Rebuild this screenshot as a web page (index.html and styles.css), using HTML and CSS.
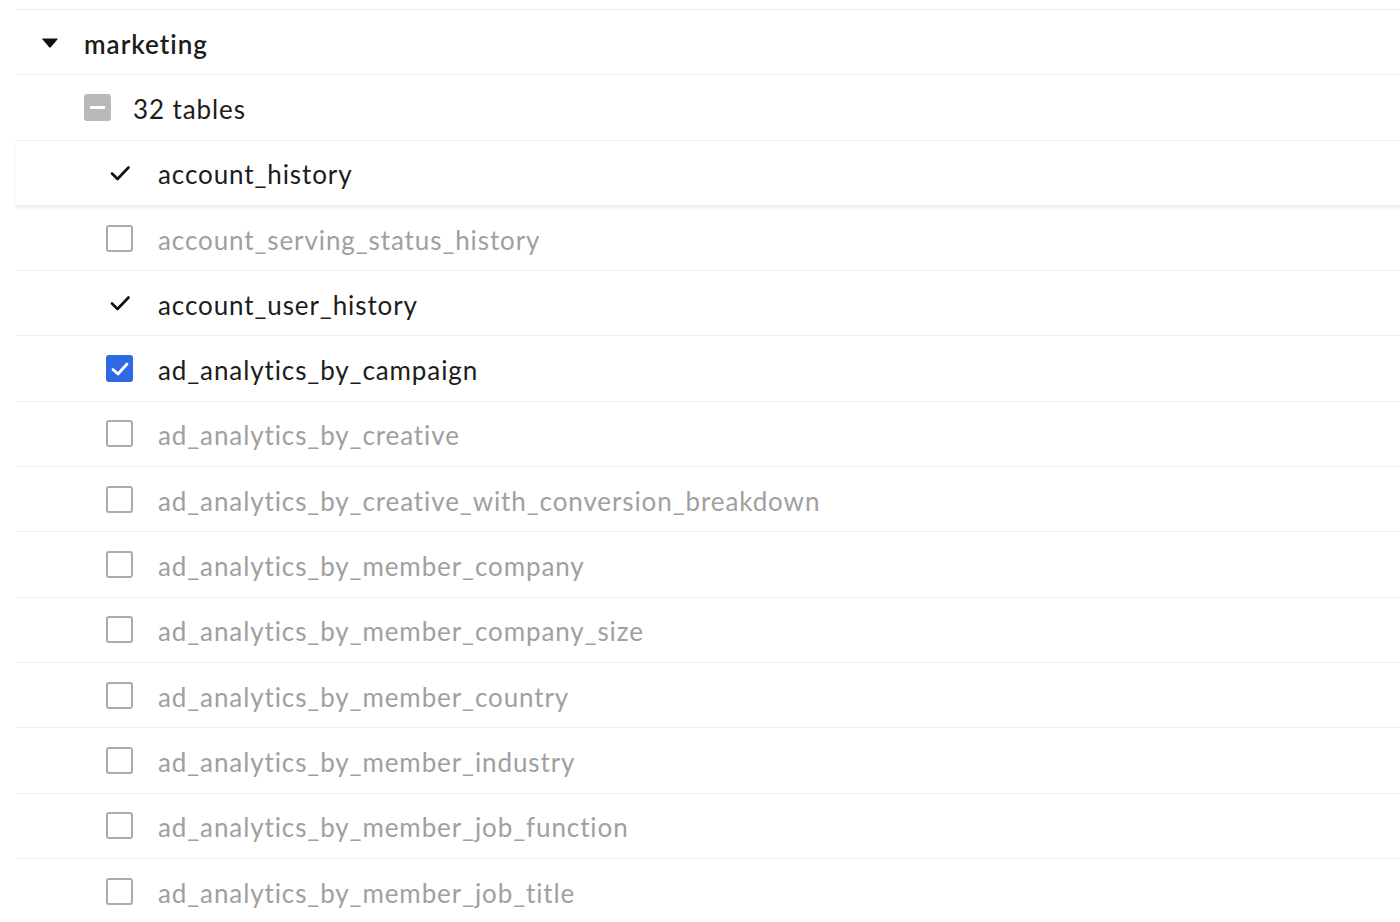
FILE: index.html
```html
<!DOCTYPE html>
<html>
<head>
<meta charset="utf-8">
<link rel="stylesheet" href="styles.css">
</head>
<body>
<div class="tree">
  <div class="row schema">
    <span class="caret"><svg width="18" height="10" viewBox="0 0 18 10"><path d="M1 1.5 Q1 0.5 2 0.5 L16 0.5 Q17 0.5 16.4 1.4 L10 9 Q9 10 8 9 L1.6 1.4 Z" fill="#111"/></svg></span>
    <span class="label strong">marketing</span>
  </div>
  <div class="row group">
    <span class="box partial"><span class="dash"></span></span>
    <span class="label">32 tables</span>
  </div>
  <div class="row table shadowed">
    <span class="icon"><svg width="22" height="18" viewBox="0 0 22 18"><path d="M3 9.5 L8.5 15 L19.5 3.5" fill="none" stroke="#111" stroke-width="2.6" stroke-linecap="round" stroke-linejoin="round"/></svg></span>
    <span class="label">account_history</span>
  </div>
  <div class="row table off">
    <span class="box"></span>
    <span class="label">account_serving_status_history</span>
  </div>
  <div class="row table">
    <span class="icon"><svg width="22" height="18" viewBox="0 0 22 18"><path d="M3 9.5 L8.5 15 L19.5 3.5" fill="none" stroke="#111" stroke-width="2.6" stroke-linecap="round" stroke-linejoin="round"/></svg></span>
    <span class="label">account_user_history</span>
  </div>
  <div class="row table">
    <span class="box checked"><svg width="20" height="16" viewBox="0 0 20 16"><path d="M3 8.5 L8 13 L17 3" fill="none" stroke="#fff" stroke-width="2.8" stroke-linecap="round" stroke-linejoin="round"/></svg></span>
    <span class="label">ad_analytics_by_campaign</span>
  </div>
  <div class="row table off">
    <span class="box"></span>
    <span class="label">ad_analytics_by_creative</span>
  </div>
  <div class="row table off">
    <span class="box"></span>
    <span class="label">ad_analytics_by_creative_with_conversion_breakdown</span>
  </div>
  <div class="row table off">
    <span class="box"></span>
    <span class="label">ad_analytics_by_member_company</span>
  </div>
  <div class="row table off">
    <span class="box"></span>
    <span class="label">ad_analytics_by_member_company_size</span>
  </div>
  <div class="row table off">
    <span class="box"></span>
    <span class="label">ad_analytics_by_member_country</span>
  </div>
  <div class="row table off">
    <span class="box"></span>
    <span class="label">ad_analytics_by_member_industry</span>
  </div>
  <div class="row table off">
    <span class="box"></span>
    <span class="label">ad_analytics_by_member_job_function</span>
  </div>
  <div class="row table off">
    <span class="box"></span>
    <span class="label">ad_analytics_by_member_job_title</span>
  </div>
</div>
</body>
</html>
```

FILE: styles.css
```css
html, body {
  margin: 0;
  padding: 0;
  background: #fff;
  overflow: hidden;
}
body {
  font-family: "Lato", "Noto Sans", sans-serif;
  color: #1c1c1c;
  height: 922px;
}
.tree {
  margin-top: 9px;
  margin-left: 16px;
  border-top: 1px solid #ececec;
}
.row {
  display: flex;
  align-items: center;
  box-sizing: border-box;
  height: 65.3px;
  border-bottom: 1px solid #efefef;
  font-size: 26px;
  letter-spacing: 0.9px;
  position: relative;
}
.row.shadowed {
  border-bottom: 1px solid #ececec;
  box-shadow: 0 2px 4px rgba(0,0,0,0.08);
  z-index: 1;
}
.row.schema {
  padding-left: 25px;
}
.caret {
  width: 18px;
  height: 10px;
  display: flex;
  margin-right: 25px;
  margin-top: 1px;
}
.strong {
  font-weight: 600;
  letter-spacing: 1px;
}
.row.group {
  padding-left: 68px;
}
.row.group .label {
  margin-left: 22px;
}
.row.table {
  padding-left: 90px;
}
.row.table .label {
  margin-left: 25px;
}
.row.off .label {
  color: #a0a0a0;
}
.box {
  width: 27px;
  height: 27px;
  box-sizing: border-box;
  border: 2px solid #ababab;
  border-radius: 3px;
  display: flex;
  align-items: center;
  justify-content: center;
  flex-shrink: 0;
  background: #fff;
}
.box.partial {
  background: #b9b9b9;
  border-color: #b9b9b9;
}
.dash {
  width: 15px;
  height: 3px;
  background: #fff;
}
.box.checked {
  background: #2d6ae3;
  border-color: #2d6ae3;
}
.icon {
  width: 27px;
  height: 27px;
  display: flex;
  align-items: center;
  justify-content: center;
  flex-shrink: 0;
}
.label {
  white-space: nowrap;
  padding-top: 3px;
}
```
